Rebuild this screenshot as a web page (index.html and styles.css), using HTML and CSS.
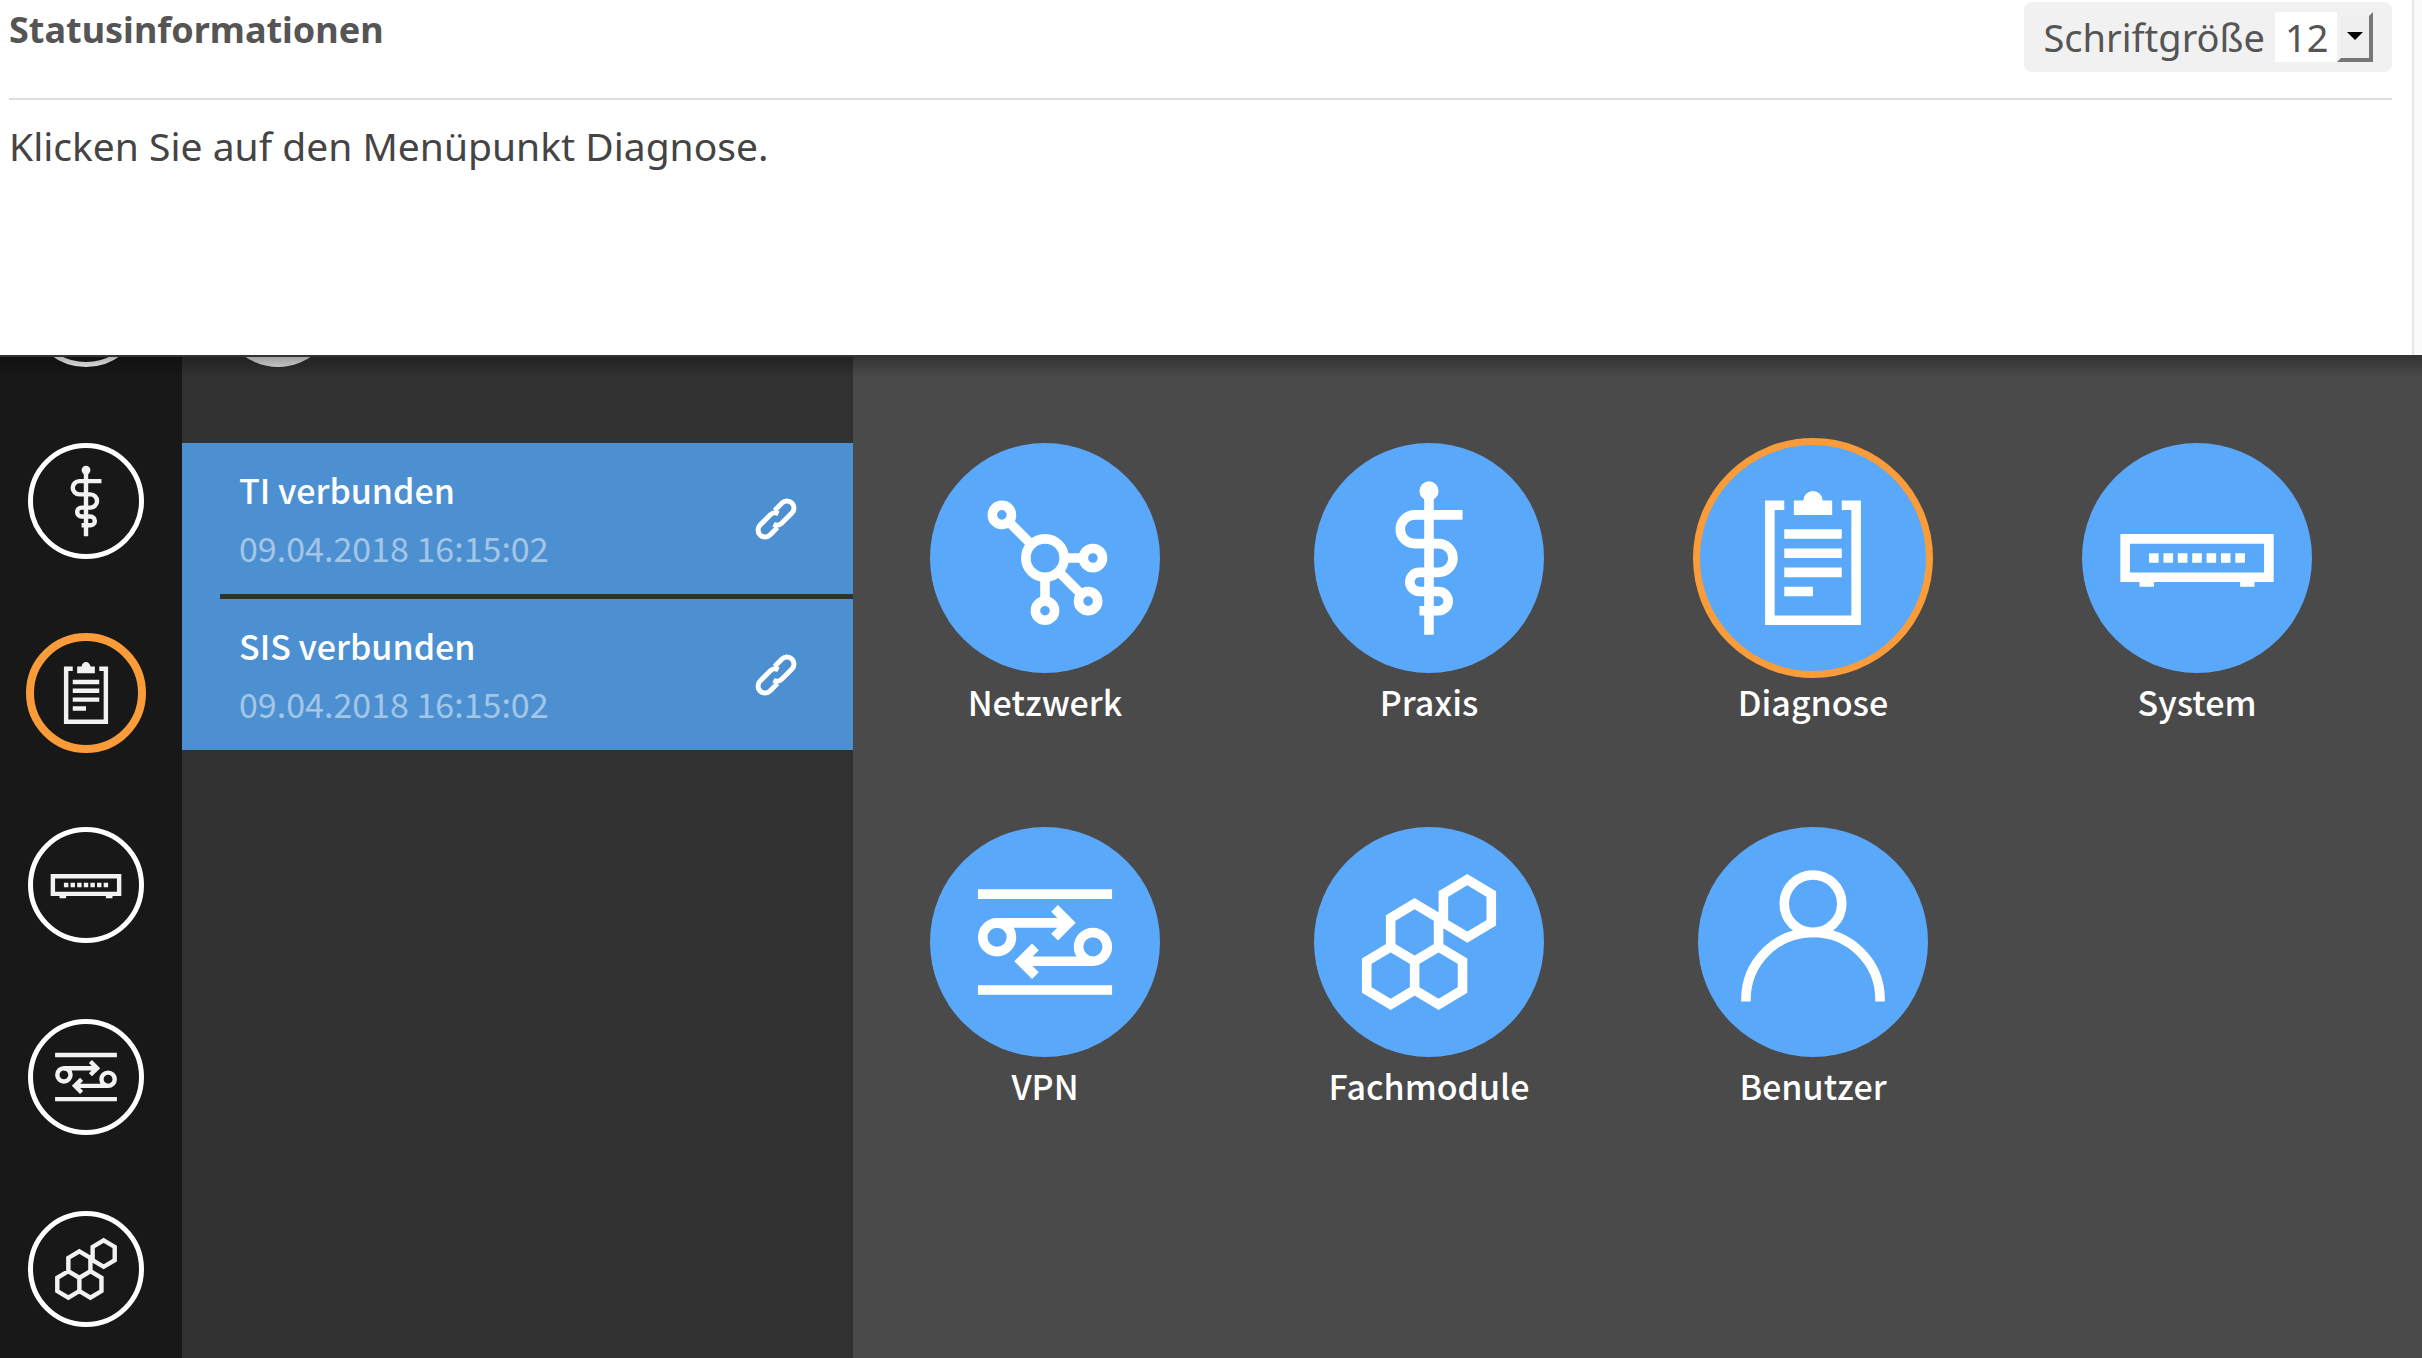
FILE: index.html
```html
<!DOCTYPE html>
<html lang="de">
<head>
<meta charset="utf-8">
<meta name="viewport" content="width=device-width, initial-scale=1">
<title>Statusinformationen</title>
<link rel="stylesheet" href="styles.css">
</head>
<body>
<svg class="sprite" aria-hidden="true">
  <symbol id="netzwerk" viewBox="0 0 48 48">
    <circle cx="24" cy="24" r="4"/><circle cx="15" cy="15" r="2"/><circle cx="34" cy="24" r="2"/><circle cx="33" cy="33" r="2"/><circle cx="24" cy="35" r="2"/>
    <path d="M16.4 16.4l4.8 4.8M28 24h4M26.8 26.8l4.8 4.8M24 28v5"/>
  </symbol>
  <symbol id="praxis" viewBox="0 0 48 48">
    <circle class="solid" cx="24" cy="10" r="2"/>
    <path d="M24 10v30M31 15H21a3 3 0 0 0 0 6h5a3 3 0 0 1 0 6h-4a2 2 0 0 0 0 4h4a2 2 0 0 1 0 4h-4"/>
  </symbol>
  <symbol id="diagnose" viewBox="0 0 48 48">
    <path d="M18 13h-3v24h18V13h-3M18 19h12M18 23h12M18 27h12M18 31h6"/>
    <path class="solid" d="M20 12h2a2 2 0 0 1 4 0h2v3h-8z"/>
  </symbol>
  <symbol id="system" viewBox="0 0 48 48">
    <path d="M9 20h30v8H9z"/>
    <path class="solid" d="M12 29h3v1h-3zM33 29h3v1h-3zM14 23h2v2h-2zM17 23h2v2h-2zM20 23h2v2h-2zM23 23h2v2h-2zM26 23h2v2h-2zM29 23h2v2h-2zM32 23h2v2h-2z"/>
  </symbol>
  <symbol id="vpn" viewBox="0 0 48 48">
    <path d="M10 14h28M10 34h28M14 20h15M26 17l3 3-3 3M34 28H19M22 25l-3 3 3 3"/>
    <circle cx="14" cy="23" r="3"/><circle cx="34" cy="25" r="3"/>
  </symbol>
  <symbol id="fachmodule" viewBox="0 0 48 48">
    <path d="M32 11l5 3v6l-5 3-5-3v-6zM21 16l5 3v6l-5 3-5-3v-6zM16 25l5 3v6l-5 3-5-3v-6zM26 25l5 3v6l-5 3-5-3v-6z"/>
  </symbol>
  <symbol id="benutzer" viewBox="0 0 48 48">
    <circle cx="24" cy="16" r="6"/><path d="M10 36.4V36a14 14 0 0 1 28 0v.4"/>
  </symbol>
  <symbol id="link" viewBox="-24 -24 48 48">
    <g transform="rotate(-45)"><path d="M5 -7H15.500a7 7 0 0 1 0 14H1a7 7 0 0 1 -6.500 -5M-5 7H-15.500a7 7 0 0 1 0 -14H-1a7 7 0 0 1 6.500 5"/></g>
  </symbol>
</svg>

<header class="intro">
  <div class="intro-head">
    <h1>Statusinformationen</h1>
    <div class="font-size">
      <label for="size">Schriftgröße</label>
      <span class="picker"><select id="size"><option>10</option><option selected>12</option><option>14</option></select></span>
    </div>
  </div>
  <p>Klicken Sie auf den Menüpunkt Diagnose.</p>
</header>

<div class="app">
  <nav class="rail" aria-label="Bereiche">
    <button type="button" aria-label="Netzwerk"><svg class="icon"><use href="#netzwerk"/></svg></button>
    <button type="button" aria-label="Praxis"><svg class="icon"><use href="#praxis"/></svg></button>
    <button type="button" class="marked" aria-label="Diagnose"><svg class="icon"><use href="#diagnose"/></svg></button>
    <button type="button" aria-label="System"><svg class="icon"><use href="#system"/></svg></button>
    <button type="button" aria-label="VPN"><svg class="icon"><use href="#vpn"/></svg></button>
    <button type="button" aria-label="Fachmodule"><svg class="icon"><use href="#fachmodule"/></svg></button>
  </nav>

  <aside class="status">
    <div class="avatar"></div>
    <ul>
      <li><div><strong>TI verbunden</strong><time>09.04.2018 16:15:02</time></div><svg class="icon link"><use href="#link"/></svg></li>
      <li><div><strong>SIS verbunden</strong><time>09.04.2018 16:15:02</time></div><svg class="icon link"><use href="#link"/></svg></li>
    </ul>
  </aside>

  <main class="tiles">
    <button type="button"><span class="disc"><svg class="icon"><use href="#netzwerk"/></svg></span>Netzwerk</button>
    <button type="button"><span class="disc"><svg class="icon"><use href="#praxis"/></svg></span>Praxis</button>
    <button type="button"><span class="disc marked"><svg class="icon"><use href="#diagnose"/></svg></span>Diagnose</button>
    <button type="button"><span class="disc"><svg class="icon"><use href="#system"/></svg></span>System</button>
    <button type="button"><span class="disc"><svg class="icon"><use href="#vpn"/></svg></span>VPN</button>
    <button type="button"><span class="disc"><svg class="icon"><use href="#fachmodule"/></svg></span>Fachmodule</button>
    <button type="button"><span class="disc"><svg class="icon"><use href="#benutzer"/></svg></span>Benutzer</button>
  </main>
</div>
</body>
</html>
```
FILE: styles.css
```css
*,
*::before,
*::after {
  box-sizing: border-box;
}

body {
  margin: 0;
  height: 100vh;
  display: flex;
  flex-direction: column;
  background: #fafafa;
  font-family: "Noto Sans", "Open Sans", sans-serif;
  font-size: 38px;
  color: #444;
}

button {
  border: 0;
  padding: 0;
  background: none;
  font: inherit;
  color: inherit;
}

.sprite {
  display: none;
}

.icon {
  display: block;
  fill: none;
  stroke: currentColor;
  stroke-width: 2;
}

.solid {
  fill: currentColor;
  stroke: none;
}

/* Introduction */
.intro {
  height: 355px;
  margin-right: 8px;
  padding: 2px 20px 0 9px;
  border-right: 2px solid #e6e6e6;
  background: #fff;
}

.intro-head {
  display: flex;
  justify-content: space-between;
  align-items: flex-start;
  height: 98px;
  border-bottom: 2px solid #dcdcdc;
}

h1 {
  margin: 0;
  font-size: 36px;
  line-height: 56px;
  color: #555;
}

.intro p {
  margin: 20px 0 0;
  font-size: 39px;
  line-height: 52px;
}

.font-size {
  display: flex;
  align-items: center;
  gap: 10px;
  height: 70px;
  padding: 0 19px;
  border-radius: 8px;
  background: #f1f1f1;
  color: #555;
}

.font-size label {
  line-height: 50px;
}

.picker {
  position: relative;
  display: block;
}

.picker select {
  display: block;
  appearance: none;
  width: 98px;
  height: 50px;
  padding: 0 36px 0 10px;
  border: 0;
  background: #fff;
  font: inherit;
  line-height: 50px;
  color: inherit;
}

.picker::before {
  content: "";
  position: absolute;
  top: 0;
  right: 0;
  width: 36px;
  height: 50px;
  border: 4px solid;
  border-color: #f2f2f2 #777 #777 #f2f2f2;
  background: #efefef;
  pointer-events: none;
}

.picker::after {
  content: "";
  position: absolute;
  top: 20px;
  right: 10px;
  border: 8px solid transparent;
  border-top-color: #000;
  border-bottom: 0;
  pointer-events: none;
}

/* Device interface, scrolled down a little */
.app {
  position: relative;
  flex: 1 1 0;
  min-height: 0;
  display: flex;
  overflow: hidden;
  background: #4a4a4a;
  font-family: "Noto Sans CJK SC", sans-serif;
  font-size: 34px;
  font-weight: 500;
  line-height: 58px;
  color: #fff;
}

.app::after {
  content: "";
  position: absolute;
  inset: 0 0 auto;
  height: 22px;
  border-top: 2px solid #333;
  background: linear-gradient(rgba(0, 0, 0, 0.3), rgba(0, 0, 0, 0));
}

.rail {
  flex: none;
  width: 182px;
  display: flex;
  flex-direction: column;
  gap: 76px;
  padding-left: 28px;
  background: #181818;
}

.rail button {
  position: relative;
  flex: none;
  width: 116px;
  height: 116px;
  display: grid;
  place-items: center;
  border: 5px solid #fff;
  border-radius: 50%;
  color: #f2f2f2;
}

.rail button:first-child {
  margin-top: -104px;
}

.rail .icon {
  width: 106px;
  height: 106px;
}

.rail .marked {
  border-color: transparent;
}

.marked::after {
  content: "";
  position: absolute;
  inset: -5px;
  border: 7px solid #fa9c39;
  border-radius: 50%;
}

.rail .marked::after {
  inset: -7px;
  border-width: 8px;
}

.status {
  flex: none;
  width: 671px;
  background: #313131;
}

.avatar {
  width: 116px;
  height: 116px;
  margin: -104px 0 76px 38px;
  border-radius: 50%;
  background: #e6e6e6;
}

.status ul {
  margin: 0;
  padding: 0;
  list-style: none;
  background: #4d90d1;
}

.status li {
  display: flex;
  justify-content: space-between;
  align-items: center;
  height: 151px;
  margin-left: 38px;
  padding: 0 53px 0 19px;
}

.status li + li {
  height: 156px;
  border-top: 5px solid #313131;
}

.status strong,
.status time {
  display: block;
  font-weight: inherit;
}

.status time {
  font-weight: 400;
  color: #a4c6e6;
}

.link {
  width: 48px;
  height: 48px;
  stroke-width: 5;
}

.tiles {
  flex: 1;
  display: grid;
  grid-template-columns: repeat(auto-fill, 384px);
  grid-auto-rows: 384px;
  padding-top: 88px;
}

.tiles button {
  display: flex;
  flex-direction: column;
  align-items: center;
}

.disc {
  position: relative;
  border-radius: 50%;
  background: #59a8f9;
}

.disc .icon {
  width: 230px;
  height: 230px;
}
```
